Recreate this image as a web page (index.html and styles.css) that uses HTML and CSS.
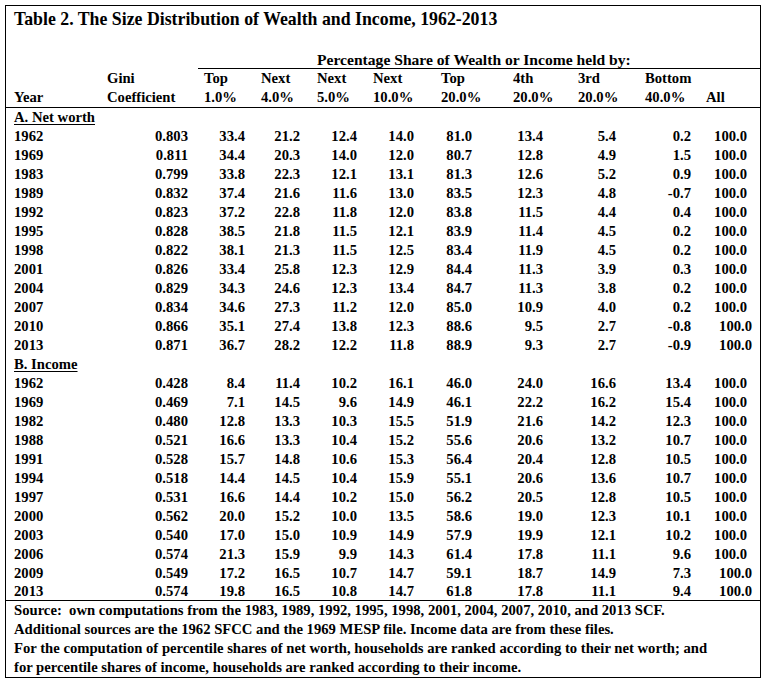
FILE: index.html
```html
<!DOCTYPE html>
<html>
<head>
<meta charset="utf-8">
<link rel="stylesheet" href="styles.css">
</head>
<body>
<div class="box">
  <div class="title">Table 2. The Size Distribution of Wealth and Income, 1962-2013</div>
  <table class="tbl">
    <colgroup>
      <col class="c-year"><col class="c-gini"><col class="c-top1"><col class="c-n4"><col class="c-n5"><col class="c-n10"><col class="c-top20"><col class="c-4th"><col class="c-3rd"><col class="c-bot"><col class="c-all">
    </colgroup>
    <thead>
      <tr class="h1">
        <th></th><th></th>
        <th colspan="9" class="pct">Percentage Share of Wealth or Income held by:</th>
      </tr>
      <tr class="h2">
        <th></th><th>Gini</th><th>Top</th><th>Next</th><th>Next</th><th>Next</th><th>Top</th><th>4th</th><th>3rd</th><th>Bottom</th><th></th>
      </tr>
      <tr class="h3">
        <th>Year</th><th>Coefficient</th><th>1.0%</th><th>4.0%</th><th>5.0%</th><th>10.0%</th><th>20.0%</th><th>20.0%</th><th>20.0%</th><th>40.0%</th><th>All</th>
      </tr>
    </thead>
    <tbody>
      <tr class="sec"><td colspan="11"><span class="ul">A. Net worth</span></td></tr>
      <tr><td>1962</td><td>0.803</td><td>33.4</td><td>21.2</td><td>12.4</td><td>14.0</td><td>81.0</td><td>13.4</td><td>5.4</td><td>0.2</td><td>100.0</td></tr>
      <tr><td>1969</td><td>0.811</td><td>34.4</td><td>20.3</td><td>14.0</td><td>12.0</td><td>80.7</td><td>12.8</td><td>4.9</td><td>1.5</td><td>100.0</td></tr>
      <tr><td>1983</td><td>0.799</td><td>33.8</td><td>22.3</td><td>12.1</td><td>13.1</td><td>81.3</td><td>12.6</td><td>5.2</td><td>0.9</td><td>100.0</td></tr>
      <tr><td>1989</td><td>0.832</td><td>37.4</td><td>21.6</td><td>11.6</td><td>13.0</td><td>83.5</td><td>12.3</td><td>4.8</td><td>-0.7</td><td>100.0</td></tr>
      <tr><td>1992</td><td>0.823</td><td>37.2</td><td>22.8</td><td>11.8</td><td>12.0</td><td>83.8</td><td>11.5</td><td>4.4</td><td>0.4</td><td>100.0</td></tr>
      <tr><td>1995</td><td>0.828</td><td>38.5</td><td>21.8</td><td>11.5</td><td>12.1</td><td>83.9</td><td>11.4</td><td>4.5</td><td>0.2</td><td>100.0</td></tr>
      <tr><td>1998</td><td>0.822</td><td>38.1</td><td>21.3</td><td>11.5</td><td>12.5</td><td>83.4</td><td>11.9</td><td>4.5</td><td>0.2</td><td>100.0</td></tr>
      <tr><td>2001</td><td>0.826</td><td>33.4</td><td>25.8</td><td>12.3</td><td>12.9</td><td>84.4</td><td>11.3</td><td>3.9</td><td>0.3</td><td>100.0</td></tr>
      <tr><td>2004</td><td>0.829</td><td>34.3</td><td>24.6</td><td>12.3</td><td>13.4</td><td>84.7</td><td>11.3</td><td>3.8</td><td>0.2</td><td>100.0</td></tr>
      <tr><td>2007</td><td>0.834</td><td>34.6</td><td>27.3</td><td>11.2</td><td>12.0</td><td>85.0</td><td>10.9</td><td>4.0</td><td>0.2</td><td>100.0</td></tr>
      <tr class="shift"><td>2010</td><td>0.866</td><td>35.1</td><td>27.4</td><td>13.8</td><td>12.3</td><td>88.6</td><td>9.5</td><td>2.7</td><td>-0.8</td><td>100.0</td></tr>
      <tr class="shift"><td>2013</td><td>0.871</td><td>36.7</td><td>28.2</td><td>12.2</td><td>11.8</td><td>88.9</td><td>9.3</td><td>2.7</td><td>-0.9</td><td>100.0</td></tr>
      <tr class="sec"><td colspan="11"><span class="ul">B. Income</span></td></tr>
      <tr><td>1962</td><td>0.428</td><td>8.4</td><td>11.4</td><td>10.2</td><td>16.1</td><td>46.0</td><td>24.0</td><td>16.6</td><td>13.4</td><td>100.0</td></tr>
      <tr><td>1969</td><td>0.469</td><td>7.1</td><td>14.5</td><td>9.6</td><td>14.9</td><td>46.1</td><td>22.2</td><td>16.2</td><td>15.4</td><td>100.0</td></tr>
      <tr><td>1982</td><td>0.480</td><td>12.8</td><td>13.3</td><td>10.3</td><td>15.5</td><td>51.9</td><td>21.6</td><td>14.2</td><td>12.3</td><td>100.0</td></tr>
      <tr><td>1988</td><td>0.521</td><td>16.6</td><td>13.3</td><td>10.4</td><td>15.2</td><td>55.6</td><td>20.6</td><td>13.2</td><td>10.7</td><td>100.0</td></tr>
      <tr><td>1991</td><td>0.528</td><td>15.7</td><td>14.8</td><td>10.6</td><td>15.3</td><td>56.4</td><td>20.4</td><td>12.8</td><td>10.5</td><td>100.0</td></tr>
      <tr><td>1994</td><td>0.518</td><td>14.4</td><td>14.5</td><td>10.4</td><td>15.9</td><td>55.1</td><td>20.6</td><td>13.6</td><td>10.7</td><td>100.0</td></tr>
      <tr><td>1997</td><td>0.531</td><td>16.6</td><td>14.4</td><td>10.2</td><td>15.0</td><td>56.2</td><td>20.5</td><td>12.8</td><td>10.5</td><td>100.0</td></tr>
      <tr><td>2000</td><td>0.562</td><td>20.0</td><td>15.2</td><td>10.0</td><td>13.5</td><td>58.6</td><td>19.0</td><td>12.3</td><td>10.1</td><td>100.0</td></tr>
      <tr><td>2003</td><td>0.540</td><td>17.0</td><td>15.0</td><td>10.9</td><td>14.9</td><td>57.9</td><td>19.9</td><td>12.1</td><td>10.2</td><td>100.0</td></tr>
      <tr><td>2006</td><td>0.574</td><td>21.3</td><td>15.9</td><td>9.9</td><td>14.3</td><td>61.4</td><td>17.8</td><td>11.1</td><td>9.6</td><td>100.0</td></tr>
      <tr class="shift"><td>2009</td><td>0.549</td><td>17.2</td><td>16.5</td><td>10.7</td><td>14.7</td><td>59.1</td><td>18.7</td><td>14.9</td><td>7.3</td><td>100.0</td></tr>
      <tr class="shift last"><td>2013</td><td>0.574</td><td>19.8</td><td>16.5</td><td>10.8</td><td>14.7</td><td>61.8</td><td>17.8</td><td>11.1</td><td>9.4</td><td>100.0</td></tr>
    </tbody>
  </table>
  <div class="foot">
    <div class="fline">Source:&nbsp; own computations from the 1983, 1989, 1992, 1995, 1998, 2001, 2004, 2007, 2010, and 2013 SCF.</div>
    <div class="fline">Additional sources are the 1962 SFCC and the 1969 MESP file. Income data are from these files.</div>
    <div class="fline">For the computation of percentile shares of net worth, households are ranked according to their net worth; and</div>
    <div class="fline">for percentile shares of income, households are ranked according to their income.</div>
  </div>
</div>
</body>
</html>
```

FILE: styles.css
```css
html, body {
  margin: 0;
  padding: 0;
  background: #fff;
}
body {
  font-family: "Liberation Serif", "Times New Roman", serif;
  font-weight: bold;
  color: #000;
  font-size: 14.67px;
}
.box {
  margin: 5px 0 0 5px;
  width: 754px;
  border: 1px solid #000;
}
.title {
  font-size: 17.8px;
  line-height: 26px;
  height: 45px;
  padding-left: 8px;
}
.tbl {
  border-collapse: collapse;
  table-layout: fixed;
  width: 754px;
}
.c-year { width: 95px; }
.c-gini { width: 97px; }
.c-top1 { width: 57px; }
.c-n4 { width: 56px; }
.c-n5 { width: 56px; }
.c-n10 { width: 68px; }
.c-top20 { width: 72px; }
.c-4th { width: 65px; }
.c-3rd { width: 67px; }
.c-bot { width: 61px; }
.c-all { width: 60px; }

.tbl th, .tbl td {
  padding: 0;
  line-height: 19px;
  height: 19px;
  white-space: nowrap;
  font-weight: bold;
}
.tbl th {
  text-align: left;
  padding-left: 6px;
}
.tbl th:first-child {
  padding-left: 8px;
}
.h1 th {
  height: 17px;
  line-height: 17px;
}
.h1 .pct {
  text-align: left;
  padding-left: 119px;
  font-size: 15.6px;
  border-bottom: 1px solid #000;
}
.h3 th {
  border-bottom: 1px solid #000;
}
.tbl td {
  text-align: right;
}
.tbl td:nth-child(1) { text-align: left; padding-left: 8px; }
.tbl td:nth-child(2) { padding-right: 10px; }
.tbl td:nth-child(3) { padding-right: 10px; }
.tbl td:nth-child(4) { padding-right: 11px; }
.tbl td:nth-child(5) { padding-right: 10px; }
.tbl td:nth-child(6) { padding-right: 21px; }
.tbl td:nth-child(7) { padding-right: 35px; }
.tbl td:nth-child(8) { padding-right: 29px; }
.tbl td:nth-child(9) { padding-right: 23px; }
.tbl td:nth-child(10) { padding-right: 9px; }
.tbl td:nth-child(11) { padding-right: 13px; }
.tbl .shift td:nth-child(11) { padding-right: 8px; }
.tbl .sec td {
  text-align: left;
  padding-left: 8px;
}
.ul {
  text-decoration: underline;
  text-decoration-thickness: 1px;
  text-underline-offset: 2px;
}
.tbl .last td {
  height: 17px;
  line-height: 17px;
}
.foot {
  border-top: 1px solid #000;
  padding-left: 8px;
}
.fline {
  line-height: 19px;
  white-space: nowrap;
}
```
